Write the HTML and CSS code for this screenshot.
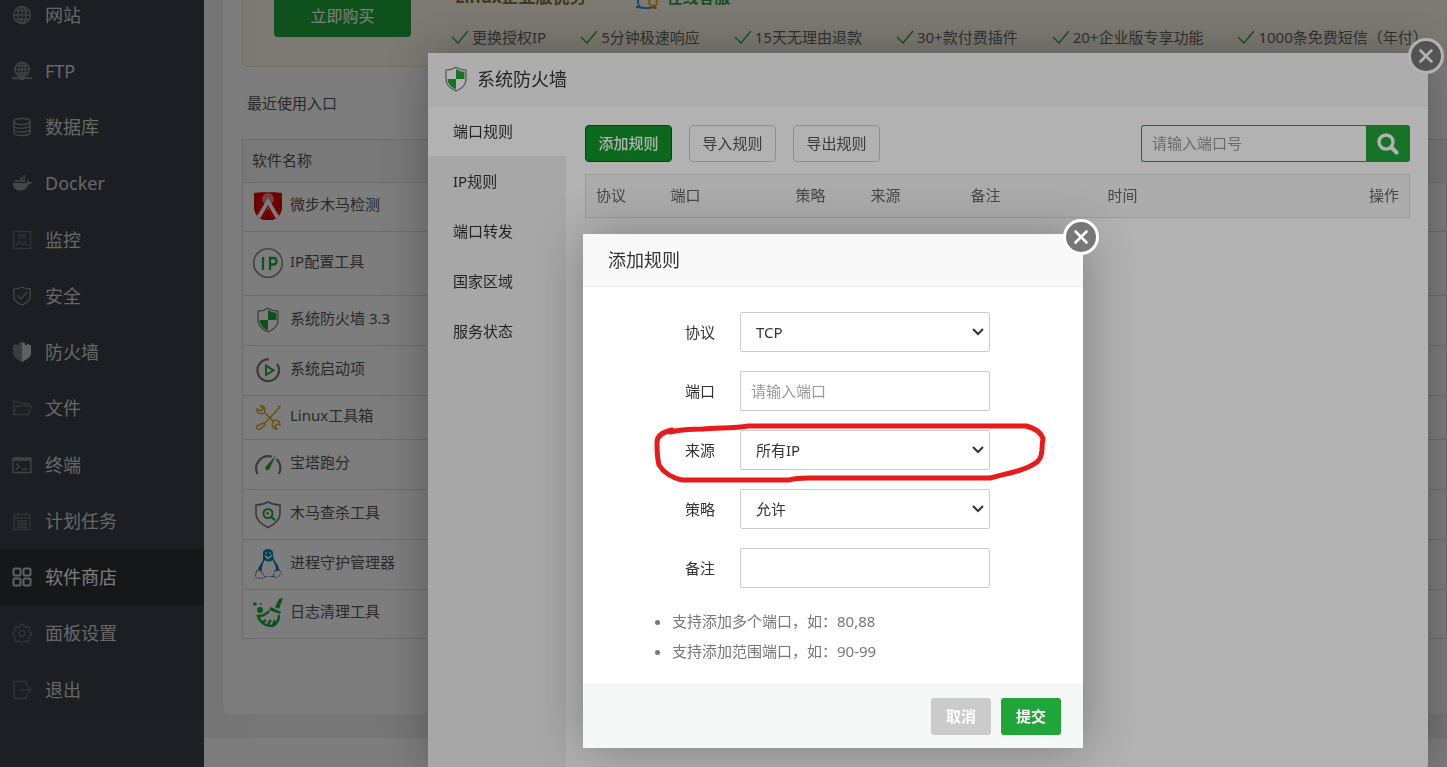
FILE: index.html
```html
<!DOCTYPE html>
<html lang="zh-CN">
<head>
<meta charset="utf-8">
<meta name="viewport" content="width=device-width, initial-scale=1">
<title>系统防火墙</title>
<link rel="stylesheet" href="styles.css">
</head>
<body>
<svg class="defs" aria-hidden="true">
  <symbol id="i-firewall" viewBox="0 0 24 26">
    <path d="M12 1.2C9 3.2 5.500 4 2 4.200V13c0 5.500 4 9.500 10 12 6-2.500 10-6.500 10-12V4.200C18.500 4 15 3.200 12 1.200z" fill="#fff" stroke="#777" stroke-width="1.200"/>
    <path d="M12 3c2.500 1.700 5.300 2.500 8.500 2.800V13H12zM12 13v10.500C7 21.300 3.700 17.800 3.500 13z" fill="#20a53a"/>
  </symbol>
  <symbol id="i-check" viewBox="0 0 18 14"><path d="M1 7l6 6L17 1" fill="none" stroke="#20a53a" stroke-width="1.300"/></symbol>
  <symbol id="i-close" viewBox="0 0 36 36">
    <circle cx="18" cy="18" r="18" fill="#fff"/><circle cx="18" cy="18" r="15" fill="#777"/>
    <path d="M12.500 12.500l11 11m0-11l-11 11" stroke="#fff" stroke-width="2.600" stroke-linecap="round"/>
  </symbol>
</svg>

<div class="page">
  <nav class="sidebar">
    <ul class="menu">
      <li><a href="#"><svg viewBox="0 0 20 20"><circle cx="10" cy="10" r="8.500"/><ellipse cx="10" cy="10" rx="4" ry="8.500"/><path d="M10 1.500v17M1.500 10h17M3 5.500h14M3 14.500h14"/></svg>网站</a></li>
      <li><a href="#"><svg viewBox="0 0 20 20"><circle cx="10" cy="8.500" r="7.200"/><ellipse cx="10" cy="8.500" rx="3.300" ry="7.200"/><path d="M10 1.500v14M3 8.500h14M4 5h12M4 12h12"/><path d="M0 17.200h20" stroke-width="2"/><path d="M8 17h4" stroke-width="4"/></svg>FTP</a></li>
      <li><a href="#"><svg viewBox="0 0 20 20"><ellipse cx="10" cy="4.500" rx="8.200" ry="3"/><path d="M1.800 4.500v11c0 4 16.400 4 16.400 0v-11M1.800 8.200c0 4 16.400 4 16.400 0M1.800 12c0 4 16.400 4 16.400 0"/></svg>数据库</a></li>
      <li><a href="#"><svg viewBox="0 0 20 20"><path class="fill" d="M1 10h13.500c.8-.6.6-2 1.300-3 .8.500 1.200 1 1.300 2 1 0 2 0 2.900.4-.6 1.300-1.700 1.800-3.200 1.800C15 15.500 12 17.500 8 17.500c-4 0-7-2-7-7.500zM3 7h2v2H3zM5.700 7h2v2h-2zM8.400 7h2v2h-2zM11.100 7h2v2h-2zM8.400 4.500h2v2h-2zM11.100 4.500h2v2h-2zM11.100 2h2v2h-2z"/></svg>Docker</a></li>
      <li><a class="dim" href="#"><svg viewBox="0 0 20 20"><path d="M1.500 1.500h17v17h-17zM6 5h8M6 7.500h8M3.500 14.500h2l2-3.500 2.500 4.500 2.500-4.500 1.500 3.500h2.500"/></svg>监控</a></li>
      <li><a href="#"><svg viewBox="0 0 20 20"><path d="M10 1c-2.500 1.500-5 1.800-8.200 1.900V10c0 4.300 3.200 7.300 8.200 9 5-1.700 8.200-4.700 8.200-9V2.900C15 2.800 12.500 2.500 10 1z"/><path d="M5.500 9.500l3.500 3.500 6-7"/></svg>安全</a></li>
      <li><a href="#"><svg viewBox="0 0 20 20"><path class="fill" opacity=".75" d="M10 0v20C5 17.500 1 15 1 11V3h2V2h2v1h2V1h2V0z"/><path class="fill lit" d="M10 0v20c5-2.500 9-5 9-9V3h-2V2h-2v1h-2V1h-2V0z"/></svg>防火墙</a></li>
      <li><a class="dim" href="#"><svg viewBox="0 0 20 20"><path d="M1.500 16.500V3.500h5l2 2h8.500V8M1.500 16.500L4.500 8h14.700l-2.700 8.500z"/></svg>文件</a></li>
      <li><a href="#"><svg viewBox="0 0 20 20"><path d="M1 3h18v14.500H1z"/><path d="M1 4.300h18" stroke-width="3"/><path d="M4 8.500L7.500 11.500 4 14.500M10 14h5"/></svg>终端</a></li>
      <li><a class="dim" href="#"><svg viewBox="0 0 20 20"><path d="M2 3.500h16v15H2zM2 7h16M6 1v4M14 1v4M4.500 10h11M4.500 13h11M4.500 16h11M7.500 9v8M10.500 9v8M13.500 9v8"/></svg>计划任务</a></li>
      <li><a class="active" href="#"><svg viewBox="0 0 20 20"><g stroke-width="2"><rect x="1.500" y="1.500" width="7" height="7" rx="1.500"/><rect x="11.500" y="1.500" width="7" height="7" rx="1.500"/><rect x="1.500" y="11.500" width="7" height="7" rx="1.500"/><rect x="11.500" y="11.500" width="7" height="7" rx="1.500"/></g></svg>软件商店</a></li>
      <li><a class="dim" href="#"><svg viewBox="0 0 20 20"><path d="M8.500 1.500h3l.6 2.200 1.700.7 2-1.100 2 2-1.100 2 .7 1.700 2.100.6v3l-2.100.5-.7 1.700 1.100 2-2 2-2-1.100-1.700.7-.6 2.100h-3l-.6-2.100-1.700-.7-2 1.100-2-2 1.100-2-.7-1.700L.5 12.600v-3l2.100-.6.7-1.700-1.100-2 2-2 2 1.100 1.700-.7z"/><circle cx="10" cy="10.500" r="3"/></svg>面板设置</a></li>
      <li><a class="dim" href="#"><svg viewBox="0 0 20 20"><path d="M14.500 6V1.500H2v17h12.500V14M8 10h11M15.500 6.500L19 10l-3.500 3.500"/></svg>退出</a></li>
    </ul>
  </nav>

  <main class="main">
    <div class="backdrop">
      <section class="card">
        <div class="banner">
          <button class="buy" type="button">立即购买</button>
          <div class="perks">
            <div class="perks-head">
              <strong>Linux企业版优势</strong>
              <a href="#"><svg viewBox="0 0 24 24"><path d="M4 20l-3 2 4 .5c3 .8 7 .8 11 0M2 19V7c0-8 18-8 18 0v5" fill="none" stroke="#208fe8" stroke-width="2"/><circle cx="17" cy="17" r="4" fill="none" stroke="#f5b82e" stroke-width="2.500"/><path d="M17 21l3 3" stroke="#f06a20" stroke-width="3"/></svg>在线客服</a>
            </div>
            <ul class="perk-list">
              <li><svg><use href="#i-check"/></svg>更换授权IP</li>
              <li><svg><use href="#i-check"/></svg>5分钟极速响应</li>
              <li><svg><use href="#i-check"/></svg>15天无理由退款</li>
              <li><svg><use href="#i-check"/></svg>30+款付费插件</li>
              <li><svg><use href="#i-check"/></svg>20+企业版专享功能</li>
              <li><svg><use href="#i-check"/></svg>1000条免费短信（年付）</li>
            </ul>
          </div>
        </div>
        <h2 class="recent">最近使用入口</h2>
        <table class="apps">
          <thead><tr><th>软件名称</th></tr></thead>
          <tbody>
            <tr class="low"><td><div class="app"><svg viewBox="0 0 32 32"><path d="M2 3c5-1 23-1 28 0v14c0 6-3 9-6 12h-3L16 17l-5 12H8c-3-3-6-6-6-12z" fill="#e00000"/><circle cx="16" cy="9" r="6" fill="#f08080"/><path d="M16 8L5 26l3 3 8-14 8 14 3-3z" fill="#fff"/><path d="M16 18l-6 12h12z" fill="#e00000"/></svg>微步木马检测</div></td></tr>
            <tr class="tall"><td><div class="app"><svg viewBox="0 0 32 32"><circle cx="16" cy="16" r="14.300" fill="none" stroke="#888" stroke-width="1.600"/><path d="M11 10v13M18 23V11h3.500c4 0 4 6.500 0 6.500H18" fill="none" stroke="#20a53a" stroke-width="2.300"/></svg>IP配置工具</div></td></tr>
            <tr><td><div class="app"><svg class="pad"><use href="#i-firewall"/></svg>系统防火墙 3.3</div></td></tr>
            <tr><td><div class="app"><svg viewBox="0 0 32 32"><path d="M17 5.500A10.800 10.800 0 1 0 25 10" fill="none" stroke="#777" stroke-width="2.200"/><path d="M14 11.500v9.500l7.500-4.700z" fill="none" stroke="#20a53a" stroke-width="2"/></svg>系统启动项</div></td></tr>
            <tr class="short"><td><div class="app"><svg viewBox="0 0 32 32"><g fill="none" stroke="#d9a520" stroke-width="1.500"><path d="M12 11l9 9M26 5l2 1-16 17M11 22l2 2-5 4c-3 1-4-1-3-3zM5 8c0 5 4 6 7 4 2-3 1-7-3-7l2 3-2 2z"/><path d="M21 20c4-2 7 0 7 4l-3-1-2 2 2 3c-4 0-6-3-4-8z"/></g></svg>Linux工具箱</div></td></tr>
            <tr><td><div class="app"><svg viewBox="0 0 32 32"><path d="M5.500 26C1 16 9 6 20 8.500M24.500 11c4 4 4.500 10 2.500 15" fill="none" stroke="#777" stroke-width="2.200"/><path d="M24 7L13.500 19c-1 3 2 4.500 4 2z" fill="#20a53a"/></svg>宝塔跑分</div></td></tr>
            <tr><td><div class="app"><svg viewBox="0 0 32 32"><path d="M16 4c-4 2.300-8 3-12 3v9c0 6 5 10 12 13.500C23 26 28 22 28 16V7c-4 0-8-.7-12-3z" fill="none" stroke="#777" stroke-width="1.600"/><circle cx="16" cy="15.500" r="4.500" fill="none" stroke="#20a53a" stroke-width="2"/><path d="M19 18.500l4 4M14.500 14.500l2 1.500" stroke="#20a53a" stroke-width="2.200"/></svg>木马查杀工具</div></td></tr>
            <tr><td><div class="app"><svg viewBox="0 0 32 32"><path d="M11 4c1-4 9-4 10 0 0 6 1 8 4 12 2 3 3 7 2 10l-4 3H10l-4-4c-1-7 5-10 5-14z" fill="#0882b8"/><path d="M12.500 12c2 2 6 2 8 0 3 5 5 10 1.500 15-3 2-9 2-11 0-2-5-1-10 1.500-15z" fill="#fff"/><path d="M13 7.500l3 3 4-3M13.500 5h1.500M17.500 5H19" stroke="#fff" stroke-width="1.500" fill="none"/><path d="M4 23c3 0 3-2 5 0l4 6c-2 3-8 0-9 1-2-2 1-4 0-7zM23 22c2 2 3 0 5 0 0 3 3 3 1 5l-6 3c-2-1-1-6 0-8z" fill="#fff" stroke="#666" stroke-dasharray="2 1"/></svg>进程守护管理器</div></td></tr>
            <tr class="low"><td><div class="app"><svg viewBox="0 0 32 32"><g fill="#20a53a"><circle cx="3" cy="7" r="1.800"/><circle cx="9" cy="7" r="1"/><circle cx="8" cy="13" r="3"/><path d="M27 2l4-1-4 11-4-2zM19 10l10 5-1 2-11-4z"/></g><path d="M17 14c-3 4-6 5-11 5 2 7 8 10 15 10 4-2 6-6 6-11M11 25l3-2M16 27l3-4M21 28l2-5" fill="none" stroke="#20a53a" stroke-width="2.400"/></svg>日志清理工具</div></td></tr>
          </tbody>
        </table>
      </section>
    </div>
  </main>
</div>

<div class="layer">
  <section class="dialog manager" role="dialog" aria-labelledby="manager-title">
    <header class="dialog-head with-icon"><svg><use href="#i-firewall"/></svg><h1 id="manager-title">系统防火墙</h1></header>
    <button class="close" type="button" aria-label="关闭"><svg><use href="#i-close"/></svg></button>
    <div class="manager-body">
      <nav class="tabs">
        <a class="on" href="#">端口规则</a><a href="#">IP规则</a><a href="#">端口转发</a><a href="#">国家区域</a><a href="#">服务状态</a>
      </nav>
      <div class="panel">
        <div class="toolbar">
          <button class="tool primary" type="button">添加规则</button>
          <button class="tool" type="button">导入规则</button>
          <button class="tool" type="button">导出规则</button>
          <form class="search">
            <input type="text" placeholder="请输入端口号" aria-label="端口号">
            <button type="button" aria-label="搜索"><svg viewBox="0 0 22 22"><circle cx="9" cy="9" r="7" fill="none" stroke="#fff" stroke-width="3.400"/><path d="M14 14l5.500 5.500" stroke="#fff" stroke-width="4" stroke-linecap="round"/></svg></button>
          </form>
        </div>
        <table class="rules">
          <colgroup><col class="c75"><col class="c125"><col class="c75"><col class="c100"><col class="c137"><col><col class="c100"></colgroup>
          <thead><tr><th>协议</th><th>端口</th><th>策略</th><th>来源</th><th>备注</th><th>时间</th><th class="end">操作</th></tr></thead>
        </table>
      </div>
    </div>
  </section>
</div>

<div class="layer top">
  <form class="dialog editor" role="dialog" aria-labelledby="editor-title">
    <header class="dialog-head"><h1 id="editor-title">添加规则</h1></header>
    <button class="close" type="button" aria-label="关闭"><svg><use href="#i-close"/></svg></button>
    <div class="fields">
      <label for="proto">协议</label><select id="proto"><option>TCP</option></select>
      <label for="port">端口</label><input id="port" type="text" placeholder="请输入端口">
      <label for="source">来源</label><select id="source"><option>所有IP</option></select>
      <label for="policy">策略</label><select id="policy"><option>允许</option></select>
      <label for="remark">备注</label><input id="remark" type="text">
    </div>
    <ul class="notes"><li>支持添加多个端口，如：80,88</li><li>支持添加范围端口，如：90-99</li></ul>
    <footer class="actions"><button class="cancel" type="button">取消</button><button class="submit" type="button">提交</button></footer>
    <svg class="mark" viewBox="0 0 394 62" aria-hidden="true"><path d="M19 7C10 9 4 12 4 19C4 27 4 35 6 42C11 50 20 55 29 57H136C143 55 150 55 156 55H337C355 50 372 48 384 39C391 33 388 24 390 16C388 8 381 5 373 3H95C80 6 62 4 50 6Q30 6 17 9"/></svg>
  </form>
</div>
</body>
</html>
```

FILE: styles.css
```css
* { box-sizing: border-box; }
html, body { height: 100%; }
body {
  margin: 0;
  overflow: hidden;
  background: #fff;
  color: #555;
  font: 15px/24px "Noto Sans", "Noto Sans CJK SC", sans-serif;
}
button, input, select { font: inherit; }
button { cursor: pointer; }
ul { margin: 0; padding: 0; list-style: none; }
a { color: inherit; text-decoration: none; }
h1, h2 { margin: 0; font-weight: 400; }
.defs { position: absolute; width: 0; height: 0; }

.page { display: flex; height: 100vh; }

.sidebar { flex: none; width: 204px; overflow: hidden; background: #3c444d; }
.menu { margin-top: -13px; background: #383f46; }
.menu li:nth-child(4n) { margin-bottom: 1px; }
.menu a {
  display: flex;
  align-items: center;
  gap: 13px;
  height: 56px;
  padding-left: 12px;
  color: #d4d4d4;
  font-size: 18px;
}
.menu svg { width: 20px; height: 20px; fill: none; stroke: #85878a; stroke-width: 1.4; }
.menu .fill { fill: #909090; stroke: none; }
.menu .lit { fill: #c4c4c4; }
.menu .dim svg { stroke: #666b70; }
.menu .active { background: #2c3035; color: #fff; }
.menu .active svg { stroke: #c8c8c8; }

.main { flex: 1; min-width: 0; overflow: hidden; }
.backdrop { margin-top: -40px; padding: 0 0 24px 19px; background: #f1f1f1; }
.card { padding: 0 0 75px 19px; background: #fff; border-radius: 6px; }
.banner {
  display: flex;
  align-items: flex-end;
  gap: 40px;
  min-height: 107px;
  padding: 24px 0 16px 31px;
  background: #fdf9e9;
  border: 1px solid #f0e6c4;
  border-radius: 6px;
}
.buy {
  flex: none;
  width: 137px;
  height: 43px;
  margin-bottom: 13px;
  border: 0;
  border-radius: 4px;
  background: #20a53a;
  color: #fff;
  font-size: 16px;
}
.perks { display: flex; flex-direction: column; gap: 16px; padding-bottom: 1px; }
.perks-head { display: flex; gap: 49px; padding-left: 4px; font-size: 17px; color: #86703f; }
.perks-head a { display: flex; align-items: center; gap: 7px; color: #20a53a; font-size: 16px; font-weight: 700; }
.perks-head svg { width: 24px; height: 24px; }
.perk-list { display: flex; gap: 34px; white-space: nowrap; color: #666; }
.perk-list li { display: flex; align-items: center; gap: 3px; }
.perk-list svg { width: 18px; height: 14px; }
.recent { margin: 24px 0 24px 5px; font-size: 15px; line-height: 24px; }

table { width: 100%; border-collapse: collapse; }
th { font-weight: 400; text-align: left; }
.apps { border: 1px solid #ddd; }
.apps th, .apps td { padding: 0 9px 2px; border-bottom: 1px solid #ddd; }
.apps th { height: 43px; background: #f6f6f6; }
.apps td { height: 50px; }
.apps .low td { height: 49px; }
.apps .tall td { height: 64px; }
.apps .short td { height: 44px; }
.app { display: flex; gap: 6px; line-height: 28px; }
.app svg { width: 32px; height: 32px; }
.app .pad { padding: 3px; }

.layer {
  position: fixed;
  inset: 0;
  display: flex;
  justify-content: flex-end;
  align-items: flex-start;
  padding: 53px 19px 0;
  background: rgba(0, 0, 0, .3);
}
.layer.top { padding: 234px 364px 0 0; }
.dialog {
  position: relative;
  background: #fff;
  border-radius: 2px;
  box-shadow: 1px 1px 50px rgba(0, 0, 0, .3);
}
.dialog-head {
  display: flex;
  align-items: center;
  gap: 9px;
  height: 53px;
  padding: 0 25px;
  background: #f8f8f8;
  border-bottom: 1px solid #eee;
  color: #333;
}
.dialog-head h1 { font-size: 18px; }
.dialog-head.with-icon { padding-left: 16px; }
.dialog-head svg { width: 24px; height: 26px; }
.close {
  position: absolute;
  top: -15px;
  right: -16px;
  width: 36px;
  height: 36px;
  padding: 0;
  border: 0;
  background: none;
}
.close svg { display: block; width: 36px; height: 36px; }

.manager { width: 1000px; min-height: calc(100vh - 53px); display: flex; flex-direction: column; }
.manager-body { flex: 1; display: flex; }
.tabs { flex: none; width: 138px; background: #f0f0f1; color: #333; }
.tabs a { display: block; padding-left: 25px; line-height: 50px; }
.tabs .on { background: #fff; }
.panel { flex: 1; padding: 19px 18px 0 19px; }
.toolbar { display: flex; gap: 17px; margin-bottom: 12px; }
.tool {
  min-width: 87px;
  height: 37px;
  padding: 0 12px 2px;
  border: 1px solid #ccc;
  border-radius: 4px;
  background: #fff;
  color: #555;
}
.tool.primary { background: #10952a; border-color: #0b5c19; color: #fff; font-weight: 500; }
.search { display: flex; width: 269px; height: 37px; margin-left: auto; }
.search input {
  flex: 1;
  min-width: 0;
  padding: 0 10px 2px;
  border: 1px solid #20a53a;
  border-right: 0;
  border-radius: 3px 0 0 3px;
  background: #fff;
}
.search button { width: 44px; padding: 0; border: 0; border-radius: 0 3px 3px 0; background: #20a53a; }
.search svg { display: block; width: 22px; height: 22px; margin: 0 auto; }
::placeholder { color: #999; opacity: 1; }
.rules { table-layout: fixed; border: 1px solid #ddd; background: #f6f6f6; }
.rules th { height: 43px; padding: 0 10px 2px; color: #666; }
.rules .end { text-align: right; }
.c75 { width: 75px; }
.c100 { width: 100px; }
.c125 { width: 125px; }
.c137 { width: 137px; }

.editor { width: 500px; color: #333; }
.fields {
  display: grid;
  grid-template-columns: 132px 250px;
  gap: 19px 25px;
  align-items: center;
  padding-top: 25px;
}
.fields label { text-align: right; }
.fields input, .fields select {
  width: 100%;
  height: 40px;
  padding: 0 10px;
  border: 1px solid #ccc;
  border-radius: 2px;
  background: #fff;
  color: #333;
}
.fields select {
  appearance: none;
  padding: 0 30px 0 15px;
  background: #fff url("data:image/svg+xml,%3Csvg xmlns='http://www.w3.org/2000/svg' width='12' height='8'%3E%3Cpath d='M1 1l5 5 5-5' fill='none' stroke='%23333' stroke-width='2'/%3E%3C/svg%3E") no-repeat right 5px center;
}
.notes { padding: 18px 0 18px 89px; color: #777; line-height: 30px; list-style: disc; }
.actions {
  display: flex;
  justify-content: flex-end;
  gap: 10px;
  padding: 13px 22px;
  background: #f6f8f8;
  border-top: 1px solid #edf1f2;
}
.actions button { width: 60px; height: 37px; padding: 0 0 2px; border: 0; border-radius: 3px; color: #fff; font-weight: 700; }
.actions .cancel { background: #cbcbcb; }
.actions .submit { background: #20a53a; }
.mark {
  position: absolute;
  top: 189px;
  left: 70px;
  width: 394px;
  height: 62px;
  fill: none;
  stroke: #e71b1b;
  stroke-width: 5;
  stroke-linecap: round;
  pointer-events: none;
}
```
